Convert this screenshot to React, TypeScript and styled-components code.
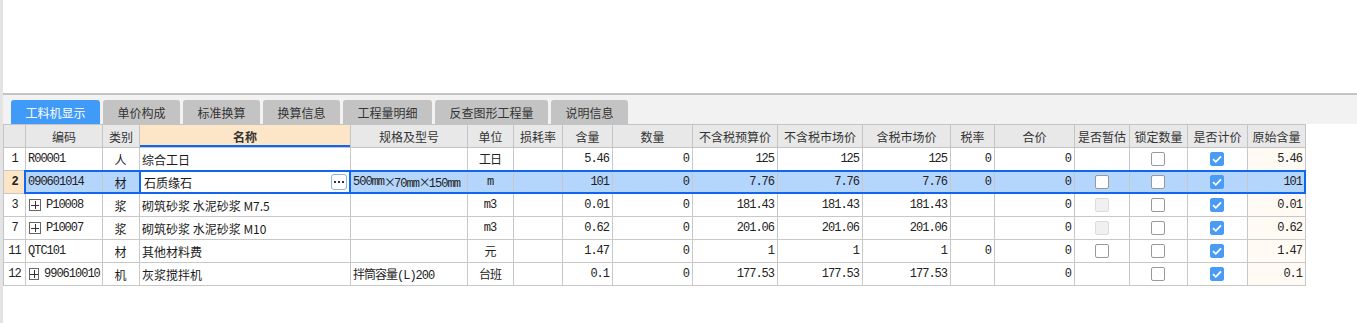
import styled, { createGlobalStyle } from "styled-components";

const GlobalStyle = createGlobalStyle`
  html, body {
    margin: 0;
    padding: 0;
    background: #fff;
  }
  body {
    font-family: "Noto Sans CJK SC", "Noto Sans", sans-serif;
    font-size: 12px;
    color: #1a1a1a;
  }
`;

const Page = styled.div`
  width: 1357px;
  height: 323px;
  box-sizing: border-box;
  border-left: 3px solid #e4e4e4;
  overflow: hidden;
`;

const TopPane = styled.div`
  height: 93px;
  border-bottom: 2px solid #c4c4c4;
`;

const TabBar = styled.div`
  display: flex;
  align-items: flex-end;
  gap: 3px;
  height: 29px;
  box-sizing: border-box;
  padding: 5px 0 0 8px;
  background: #f2f2f2;
`;

const Tab = styled.div<{ $w: number; $active?: boolean }>`
  width: ${(p) => p.$w}px;
  height: 24px;
  display: flex;
  align-items: center;
  justify-content: center;
  border-radius: 3px 3px 0 0;
  background: ${(p) => (p.$active ? "#3f9af8" : "#c3c3c3")};
  color: ${(p) => (p.$active ? "#fff" : "#333")};
  font-size: 12px;
`;

const Grid = styled.div`
  display: inline-flex;
  flex-direction: column;
  border-top: 1px solid #c4c4c4;
  border-left: 1px solid #c4c4c4;
`;

const Row = styled.div`
  display: flex;
  height: 23px;
`;

const Group = styled.div<{ $selected?: boolean }>`
  display: flex;
  position: relative;
  background: ${(p) => (p.$selected ? "#b4d5fc" : "transparent")};
  &::after {
    content: "";
    display: ${(p) => (p.$selected ? "block" : "none")};
    position: absolute;
    top: -1px;
    bottom: 0;
    left: -2px;
    right: 0;
    border: 2px solid #1166f0;
    pointer-events: none;
  }
`;

const HeadCell = styled.div<{ $w: number; $active?: boolean }>`
  width: ${(p) => p.$w}px;
  flex: none;
  box-sizing: border-box;
  display: flex;
  align-items: center;
  justify-content: center;
  border-right: 1px solid #c4c4c4;
  border-bottom: 1px solid #c4c4c4;
  background: ${(p) => (p.$active ? "#fde5c7" : "#e8e8e8")};
  box-shadow: ${(p) => (p.$active ? "inset 0 -2px 0 #1166f0" : "none")};
  font-weight: ${(p) => (p.$active ? 700 : 400)};
  color: #333;
  font-size: 12px;
  white-space: nowrap;
`;

const Cell = styled.div<{
  $w: number;
  $align?: "left" | "center" | "right";
  $bg?: string;
  $mono?: boolean;
}>`
  width: ${(p) => p.$w}px;
  flex: none;
  box-sizing: border-box;
  display: flex;
  align-items: center;
  justify-content: ${(p) =>
    p.$align === "right" ? "flex-end" : p.$align === "center" ? "center" : "flex-start"};
  padding: 0 3px 0 2px;
  border-right: 1px solid #c8c8c8;
  border-bottom: 1px solid #c8c8c8;
  background: ${(p) => p.$bg || "transparent"};
  white-space: nowrap;
  overflow: hidden;
  font-family: ${(p) =>
    p.$mono
      ? `"Liberation Mono", "Noto Sans CJK SC", monospace`
      : `"Noto Sans CJK SC", "Noto Sans", sans-serif`};
  letter-spacing: ${(p) => (p.$mono ? "-1px" : "0")};
  font-size: 12px;
  color: ${(p) => (p.$mono ? "#222" : "#1a1a1a")};
`;

const RowNum = styled(Cell)<{ $selected?: boolean }>`
  background: ${(p) => (p.$selected ? "#fde5c7" : "#fff")};
  font-weight: ${(p) => (p.$selected ? 700 : 400)};
  padding: 0;
`;

const EditCell = styled(Cell)`
  position: relative;
  overflow: visible;
  background: #fff;
  padding: 0 2px 0 4px;
  justify-content: space-between;
  &::before {
    content: "";
    position: absolute;
    top: 0;
    bottom: -1px;
    left: -1px;
    right: -1px;
    border-left: 2px solid #1166f0;
    border-right: 2px solid #1166f0;
    pointer-events: none;
  }
`;

const MoreButton = styled.span`
  width: 16px;
  height: 16px;
  box-sizing: border-box;
  border: 1px solid #8db4e6;
  border-radius: 3px;
  background: #fff;
  display: flex;
  align-items: center;
  justify-content: center;
  margin-right: 1px;
`;

const PlusBox = styled.span`
  width: 12px;
  height: 12px;
  box-sizing: border-box;
  border: 1px solid #666;
  display: inline-flex;
  align-items: center;
  justify-content: center;
  margin: 0 5px 0 1px;
  background: #fff;
`;

const Times = styled.span`
  font-family: "Noto Sans CJK SC", sans-serif;
  letter-spacing: -2px;
`;

const Check = styled.span<{ $state: Box }>`
  width: 14px;
  height: 14px;
  box-sizing: border-box;
  border-radius: 2px;
  display: ${(p) => (p.$state === "none" ? "none" : "flex")};
  align-items: center;
  justify-content: center;
  border: ${(p) =>
    p.$state === "on"
      ? "1px solid #4a9bf5"
      : p.$state === "disabled"
      ? "1px solid #dcdcdc"
      : "1px solid #999"};
  background: ${(p) =>
    p.$state === "on" ? "#4a9bf5" : p.$state === "disabled" ? "#f0f0f0" : "#fff"};
`;

type Box = "none" | "off" | "on" | "disabled";

interface Item {
  no: string;
  code: string;
  expand?: boolean;
  kind: string;
  name: string;
  spec: string;
  unit: string;
  qty: string;
  amount: string;
  budget: string;
  market: string;
  taxMarket: string;
  tax: string;
  total: string;
  est: Box;
  lock: Box;
  priced: Box;
  orig: string;
  selected?: boolean;
}

const tabs = [
  { label: "工料机显示", w: 89, active: true },
  { label: "单价构成", w: 77 },
  { label: "标准换算", w: 77 },
  { label: "换算信息", w: 77 },
  { label: "工程量明细", w: 89 },
  { label: "反查图形工程量", w: 113 },
  { label: "说明信息", w: 77 },
];

const W = {
  no: 22,
  code: 77,
  kind: 37,
  name: 211,
  spec: 117,
  unit: 46,
  loss: 49,
  qty: 50,
  amount: 80,
  budget: 85,
  market: 85,
  taxMarket: 88,
  tax: 44,
  total: 80,
  est: 55,
  lock: 58,
  priced: 60,
  orig: 58,
};

const headers: [string, number, boolean?][] = [
  ["编码", W.code],
  ["类别", W.kind],
  ["名称", W.name, true],
  ["规格及型号", W.spec],
  ["单位", W.unit],
  ["损耗率", W.loss],
  ["含量", W.qty],
  ["数量", W.amount],
  ["不含税预算价", W.budget],
  ["不含税市场价", W.market],
  ["含税市场价", W.taxMarket],
  ["税率", W.tax],
  ["合价", W.total],
  ["是否暂估", W.est],
  ["锁定数量", W.lock],
  ["是否计价", W.priced],
  ["原始含量", W.orig],
];

const items: Item[] = [
  { no: "1", code: "R00001", kind: "人", name: "综合工日", spec: "", unit: "工日", qty: "5.46", amount: "0", budget: "125", market: "125", taxMarket: "125", tax: "0", total: "0", est: "none", lock: "off", priced: "on", orig: "5.46" },
  { no: "2", code: "090601014", kind: "材", name: "石质缘石", spec: "500mm×70mm×150mm", unit: "m", qty: "101", amount: "0", budget: "7.76", market: "7.76", taxMarket: "7.76", tax: "0", total: "0", est: "off", lock: "off", priced: "on", orig: "101", selected: true },
  { no: "3", code: "P10008", expand: true, kind: "浆", name: "砌筑砂浆 水泥砂浆 M7.5", spec: "", unit: "m3", qty: "0.01", amount: "0", budget: "181.43", market: "181.43", taxMarket: "181.43", tax: "", total: "0", est: "disabled", lock: "off", priced: "on", orig: "0.01" },
  { no: "7", code: "P10007", expand: true, kind: "浆", name: "砌筑砂浆 水泥砂浆 M10", spec: "", unit: "m3", qty: "0.62", amount: "0", budget: "201.06", market: "201.06", taxMarket: "201.06", tax: "", total: "0", est: "disabled", lock: "off", priced: "on", orig: "0.62" },
  { no: "11", code: "QTC101", kind: "材", name: "其他材料费", spec: "", unit: "元", qty: "1.47", amount: "0", budget: "1", market: "1", taxMarket: "1", tax: "0", total: "0", est: "off", lock: "off", priced: "on", orig: "1.47" },
  { no: "12", code: "990610010", expand: true, kind: "机", name: "灰浆搅拌机", spec: "拌筒容量(L)200", unit: "台班", qty: "0.1", amount: "0", budget: "177.53", market: "177.53", taxMarket: "177.53", tax: "", total: "0", est: "none", lock: "off", priced: "on", orig: "0.1" },
];

// the × sign is drawn full-width in the reference, so it gets the CJK face
const Spec = ({ text }: { text: string }) => {
  const parts = text.split("×");
  return (
    <>
      {parts.map((p, i) => (
        <span key={i}>
          {i > 0 && <Times>×</Times>}
          {p}
        </span>
      ))}
    </>
  );
};

const CheckBox = ({ state }: { state: Box }) => (
  <Check $state={state}>
    {state === "on" && (
      <svg width="10" height="8" viewBox="0 0 10 8">
        <path d="M1 4.2 L3.8 6.8 L9 1.4" fill="none" stroke="#fff" strokeWidth="1.8" />
      </svg>
    )}
  </Check>
);

const Plus = () => (
  <PlusBox>
    <svg width="8" height="8" viewBox="0 0 8 8">
      <path d="M0 4 H8 M4 0 V8" stroke="#333" strokeWidth="1" shapeRendering="crispEdges" />
    </svg>
  </PlusBox>
);

const Dots = () => (
  <svg width="10" height="4" viewBox="0 0 10 4">
    <rect x="0" y="1" width="2" height="2" fill="#333" />
    <rect x="4" y="1" width="2" height="2" fill="#333" />
    <rect x="8" y="1" width="2" height="2" fill="#333" />
  </svg>
);

const App = () => {
  return (
    <Page>
      <GlobalStyle />
      <TopPane />
      <TabBar>
        {tabs.map((t) => (
          <Tab key={t.label} $w={t.w} $active={t.active}>
            {t.label}
          </Tab>
        ))}
      </TabBar>
      <Grid>
        <Row>
          <HeadCell $w={W.no} />
          {headers.map(([label, w, active]) => (
            <HeadCell key={label} $w={w} $active={active}>
              {label}
            </HeadCell>
          ))}
        </Row>
        {items.map((it) => {
          const origBg = it.selected ? undefined : "#fffaf3";
          return (
            <Row key={it.no}>
              <RowNum $w={W.no} $align="center" $mono $selected={it.selected}>
                {it.no}
              </RowNum>
              <Group $selected={it.selected}>
                <Cell $w={W.code} $mono>
                  {it.expand && <Plus />}
                  {it.code}
                </Cell>
                <Cell $w={W.kind} $align="center">
                  {it.kind}
                </Cell>
                {it.selected ? (
                  <EditCell $w={W.name}>
                    {it.name}
                    <MoreButton>
                      <Dots />
                    </MoreButton>
                  </EditCell>
                ) : (
                  <Cell $w={W.name}>{it.name}</Cell>
                )}
                <Cell $w={W.spec} $mono>
                  <Spec text={it.spec} />
                </Cell>
                <Cell $w={W.unit} $align="center" $mono>
                  {it.unit}
                </Cell>
                <Cell $w={W.loss} />
                <Cell $w={W.qty} $align="right" $mono>
                  {it.qty}
                </Cell>
                <Cell $w={W.amount} $align="right" $mono>
                  {it.amount}
                </Cell>
                <Cell $w={W.budget} $align="right" $mono>
                  {it.budget}
                </Cell>
                <Cell $w={W.market} $align="right" $mono>
                  {it.market}
                </Cell>
                <Cell $w={W.taxMarket} $align="right" $mono>
                  {it.taxMarket}
                </Cell>
                <Cell $w={W.tax} $align="right" $mono>
                  {it.tax}
                </Cell>
                <Cell $w={W.total} $align="right" $mono>
                  {it.total}
                </Cell>
                <Cell $w={W.est} $align="center">
                  <CheckBox state={it.est} />
                </Cell>
                <Cell $w={W.lock} $align="center">
                  <CheckBox state={it.lock} />
                </Cell>
                <Cell $w={W.priced} $align="center">
                  <CheckBox state={it.priced} />
                </Cell>
                <Cell $w={W.orig} $align="right" $mono $bg={origBg}>
                  {it.orig}
                </Cell>
              </Group>
            </Row>
          );
        })}
      </Grid>
    </Page>
  );
};

export default App;
